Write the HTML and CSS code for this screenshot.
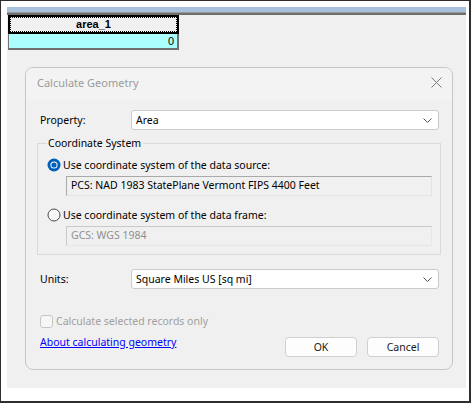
FILE: index.html
```html
<!DOCTYPE html>
<html>
<head>
<meta charset="utf-8">
<link rel="stylesheet" href="styles.css">
</head>
<body>
<div class="frame">
  <div class="panel">
    <div class="topbar"></div>
    <div class="toplines"></div>
    <div class="grid">
      <div class="hcell"><div class="hfocus">area_1</div></div>
      <div class="rcell">0</div>
    </div>
    <div class="dialog">
      <div class="titlebar">
        <span class="title">Calculate Geometry</span>
        <svg class="close" width="11" height="11" viewBox="0 0 11 11"><path d="M0.5 0.5 L10.5 10.5 M10.5 0.5 L0.5 10.5" stroke="#7a7a7a" stroke-width="1" fill="none"/></svg>
      </div>
      <div class="body">
        <div class="row">
          <span class="label">Property:</span>
          <div class="select"><span>Area</span><svg width="9" height="5" viewBox="0 0 9 5"><path d="M0.5 0.5 L4.5 4.5 L8.5 0.5" stroke="#555" stroke-width="1" fill="none"/></svg></div>
        </div>
        <fieldset class="group">
          <legend>Coordinate System</legend>
          <div class="radio-row">
            <svg class="radio" width="14" height="14" viewBox="0 0 14 14"><circle cx="7" cy="7" r="6.5" fill="#005fb8"/><circle cx="7" cy="7" r="3.6" fill="#ffffff"/><circle cx="7" cy="7" r="2.6" fill="#005fb8"/></svg>
            <span>Use coordinate system of the data source:</span>
          </div>
          <div class="field">PCS: NAD 1983 StatePlane Vermont FIPS 4400 Feet</div>
          <div class="radio-row second">
            <svg class="radio" width="14" height="14" viewBox="0 0 14 14"><circle cx="7" cy="7" r="6" fill="#f7f7f7" stroke="#4a4a4a" stroke-width="1"/></svg>
            <span>Use coordinate system of the data frame:</span>
          </div>
          <div class="field disabled">GCS: WGS 1984</div>
        </fieldset>
        <div class="row units">
          <span class="label">Units:</span>
          <div class="select"><span>Square Miles US [sq mi]</span><svg width="9" height="5" viewBox="0 0 9 5"><path d="M0.5 0.5 L4.5 4.5 L8.5 0.5" stroke="#555" stroke-width="1" fill="none"/></svg></div>
        </div>
        <div class="check-row">
          <span class="checkbox"></span>
          <span>Calculate selected records only</span>
        </div>
        <div class="bottom">
          <a class="link" href="#">About calculating geometry</a>
          <div class="buttons">
            <button class="btn">OK</button>
            <button class="btn">Cancel</button>
          </div>
        </div>
      </div>
    </div>
  </div>
</div>
</body>
</html>
```

FILE: styles.css
```css
html, body {
  margin: 0;
  padding: 0;
  background: #ffffff;
}
body {
  font-family: "Noto Sans", "Liberation Sans", sans-serif;
  font-size: 10.5px;
  color: #000;
}
.frame {
  width: 471px;
  height: 403px;
  box-sizing: border-box;
  border-left: 1px solid #2e2e2e;
  border-top: 1px solid #2e2e2e;
  border-right: 2px solid #2e2e2e;
  border-bottom: 2px solid #2e2e2e;
  padding: 6px 3px 13px 6px;
  background: #fff;
}
.panel {
  width: 100%;
  height: 100%;
  background: #f0f0f0;
  display: flex;
  flex-direction: column;
}
.topbar {
  height: 5px;
  background: #a9c1dc;
}
.toplines {
  height: 3px;
  background: linear-gradient(#9a9a9a 0 1px, #6e6e6e 1px 3px);
}
.grid {
  margin-left: 1px;
  width: 171px;
  font-family: "Liberation Sans", Arial, sans-serif;
  font-size: 11px;
}
.hcell {
  height: 19px;
  box-sizing: border-box;
  border: 2px solid #000;
  background: #f0f0f0;
}
.hfocus {
  height: 100%;
  box-sizing: border-box;
  border: 1px dotted #000;
  font-weight: bold;
  text-align: center;
  line-height: 13px;
}
.rcell {
  height: 16px;
  box-sizing: border-box;
  border-left: 1px solid #707070;
  border-right: 2px solid #707070;
  border-bottom: 2px solid #707070;
  background: #aaffff;
  text-align: right;
  padding-right: 3px;
  line-height: 14px;
}
.dialog {
  margin-top: 17px;
  margin-left: 18px;
  width: 428px;
  height: 303px;
  box-sizing: border-box;
  border: 1px solid #c6c6c6;
  border-radius: 8px;
  background: #f0f0f0;
  overflow: hidden;
  display: flex;
  flex-direction: column;
}
.titlebar {
  height: 32px;
  box-sizing: border-box;
  padding: 0 10px 3px 11px;
  display: flex;
  align-items: center;
  justify-content: space-between;
  background: #f3f3f3;
}
.title {
  color: #9b9b9b;
  font-size: 11px;
}
.body {
  padding: 10px 11px 0 11px;
  display: flex;
  flex-direction: column;
}
.row {
  display: flex;
  align-items: center;
  height: 20px;
}
.label {
  width: 94px;
  box-sizing: border-box;
  padding-left: 3px;
}
.select {
  width: 308px;
  height: 20px;
  box-sizing: border-box;
  border: 1px solid #cbcbcb;
  border-radius: 3px;
  background: #fff;
  display: flex;
  align-items: center;
  justify-content: space-between;
  padding: 0 6px 0 4px;
}
.group {
  margin: 6px 0 0 0;
  padding: 0 0 8px 9px;
  border: 1px solid #dadada;
  min-width: 0;
}
.group legend {
  padding: 0 2px 0 1px;
  line-height: 14px;
}
.radio-row {
  margin-top: 8px;
  height: 14px;
  display: flex;
  align-items: center;
  gap: 2px;
}
.radio-row.second {
  margin-top: 12px;
}
.field {
  margin: 4px 0 0 19px;
  width: 366px;
  height: 20px;
  box-sizing: border-box;
  border: 1px solid #a9a9a9;
  border-right-color: #e4e4e4;
  border-bottom-color: #e4e4e4;
  padding-left: 4px;
  line-height: 17px;
}
.field.disabled {
  border-color: #c9c9c9;
  border-right-color: #e6e6e6;
  border-bottom-color: #e6e6e6;
  color: #8f8f8f;
}
.units {
  margin-top: 14px;
}
.check-row {
  margin-top: 25px;
  padding-left: 3px;
  height: 14px;
  display: flex;
  align-items: center;
  gap: 3px;
  color: #a0a0a0;
}
.checkbox {
  width: 13px;
  height: 13px;
  box-sizing: border-box;
  border: 1px solid #c6c6c6;
  border-radius: 3px;
  background: #f6f6f6;
}
.bottom {
  margin-top: 7px;
  display: flex;
  justify-content: space-between;
  align-items: flex-start;
  padding-left: 3px;
  padding-right: 2px;
}
.link {
  color: #0000ff;
  text-decoration: underline;
  line-height: 14px;
}
.buttons {
  margin-top: 2px;
  display: flex;
  gap: 10px;
}
.btn {
  width: 72px;
  height: 20px;
  box-sizing: border-box;
  border: 1px solid #cfcfcf;
  border-radius: 4px;
  background: #fdfdfd;
  font-family: "Noto Sans", "Liberation Sans", sans-serif;
  font-size: 10.5px;
  color: #1a1a1a;
  padding: 0;
}
```
